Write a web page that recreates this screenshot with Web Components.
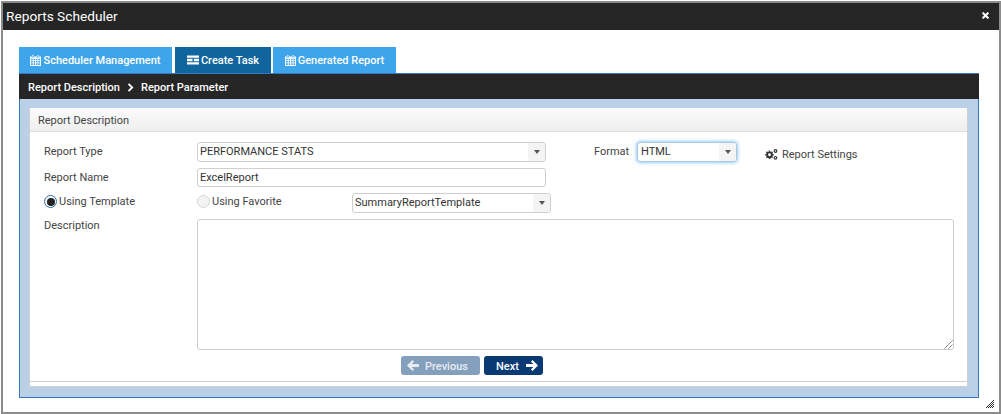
<!DOCTYPE html>
<html>
<head>
<meta charset="utf-8">
<title>Reports Scheduler</title>
<style>
html, body { margin: 0; padding: 0; background: #fff; }
body { font-family: Roboto, "Liberation Sans", sans-serif; width: 1001px; height: 414px; overflow: hidden; padding: 1px 0 0 1px; box-sizing: border-box; }
</style>
</head>
<body>
<report-window heading="Reports Scheduler">
  <tab-strip>
    <tab-button icon="calendar" width="153">Scheduler Management</tab-button>
    <tab-button icon="tasks" width="96" active>Create Task</tab-button>
    <tab-button icon="calendar" width="123">Generated Report</tab-button>
  </tab-strip>
  <step-bar></step-bar>
  <blue-panel>
    <form-card heading="Report Description">
      <form-row>
        <field-label width="153" nudge>Report Type</field-label>
        <combo-box width="349">PERFORMANCE STATS</combo-box>
        <field-label width="43" nudge style="margin-left:48px">Format</field-label>
        <combo-box width="100" focused>HTML</combo-box>
        <settings-link></settings-link>
      </form-row>
      <form-row style="margin-top:6px;height:19px">
        <field-label width="153">Report Name</field-label>
        <text-box width="349">ExcelReport</text-box>
      </form-row>
      <form-row style="margin-top:6px">
        <radio-option width="153" checked>Using Template</radio-option>
        <radio-option width="155" disabled>Using Favorite</radio-option>
        <combo-box width="199">SummaryReportTemplate</combo-box>
      </form-row>
      <form-row style="margin-top:6px;height:131px;align-items:flex-start">
        <field-label width="153">Description</field-label>
        <text-area width="757" height="131"></text-area>
      </form-row>
      <button-row>
        <nav-button dir="prev">Previous</nav-button>
        <nav-button dir="next">Next</nav-button>
      </button-row>
    </form-card>
  </blue-panel>
</report-window>
<script>
const ICONS = {
  calendar: '<svg width="11" height="11" viewBox="0 0 12 12"><path fill="currentColor" fill-rule="evenodd" d="M2.500 0h1.200v2h-1.200zM8.300 0h1.200v2h-1.200zM0 1.500h2v1.200h2.200V1.500h3.600v1.200H10V1.500h2V12H0zM1 4v1.600h2V4zm3 0v1.600h1.600V4zm2.600 0v1.600h1.600V4zM9.200 4v1.600H11V4zM1 6.500v1.700h2V6.500zm3 0v1.700h1.600V6.500zm2.600 0v1.700h1.600V6.500zm2.600 0v1.700H11V6.500zM1 9.100V11h2V9.100zm3 0V11h1.600V9.100zm2.600 0V11h1.600V9.100zm2.600 0V11H11V9.100z"/></svg>',
  tasks: '<svg width="12" height="10" viewBox="0 0 13 10"><path fill="currentColor" d="M0 0h13v2.600H0zM0 3.700h6v2.600H0zM7.500 3.700H13v2.600H7.500zM0 7.400h13V10H0z"/></svg>',
  left: '<svg width="12" height="11" viewBox="0 0 11 10"><path fill="currentColor" d="M5 0l1.500 1.500L4.200 3.700H11v2.600H4.200l2.300 2.200L5 10 0 5z"/></svg>',
  right: '<svg width="12" height="11" viewBox="0 0 11 10"><path fill="currentColor" d="M6 0L4.500 1.500l2.300 2.200H0v2.600h6.800L4.500 8.500 6 10l5-5z"/></svg>',
  gears: '<svg width="13" height="11" viewBox="0 0 13 11"><g stroke="#333" fill="none"><circle cx="4.500" cy="5.800" r="2.400" stroke-width="1.900"/><path stroke-width="1.400" d="M4.500 1.500v1.300M4.500 8.800v1.300M0.200 5.800h1.300M7.500 5.800h1.300M1.500 2.800l.9.9M6.600 7.900l.9.9M7.500 2.800l-.9.9M2.400 7.900l-.9.9"/><circle cx="10.500" cy="2" r="1.300" stroke-width="1.200"/><circle cx="10.500" cy="8.800" r="1.300" stroke-width="1.200"/></g></svg>'
}

class ReportWindow extends HTMLElement {
  constructor () {
    super()
    this.attachShadow({ mode: 'open' }).innerHTML = `
      <style>
      :host { display: block; box-sizing: border-box; width: 1000px; height: 413px; position: relative; border: 2px solid #8c8c8c; }
      .title { height: 27px; box-sizing: border-box; padding: 0 10px 2px 3px; background: #262626; color: #fff; font-size: 13.700px; display: flex; align-items: center;
        justify-content: space-between; }
      .close { width: 7px; height: 7px; }
      .body { padding: 17px 20px 0 16px; }
      .grip { position: absolute; right: 5px; bottom: 4px; }
      </style>
      <div class="title"><span id="t"></span>
        <svg class="close" viewBox="0 0 7 7"><path stroke="#fff" stroke-width="2" d="M0.600 0.600l5.800 5.800M6.400 0.600l-5.800 5.800"/></svg></div>
      <div class="body"><slot></slot></div>
      <svg class="grip" width="8" height="8" viewBox="0 0 8 8"><path stroke="#333" stroke-width="1" fill="none" d="M0 8L8 0M2 8L8 2M4 8L8 4M6 8L8 6"/></svg>`
    this.shadowRoot.getElementById('t').textContent = this.getAttribute('heading')
  }
}

class TabStrip extends HTMLElement {
  constructor () {
    super()
    this.attachShadow({ mode: 'open' }).innerHTML = `
      <style>:host { display: flex; gap: 2px; height: 26px; }
      ::slotted(:nth-child(2)) { margin-left: 1px; }</style><slot></slot>`
  }
}

class TabButton extends HTMLElement {
  constructor () {
    super()
    const icon = ICONS[this.getAttribute('icon')]
    this.attachShadow({ mode: 'open' }).innerHTML = `
      <style>
      :host { display: flex; box-sizing: border-box; width: ${this.getAttribute('width')}px; background: #3fa5eb; color: #fff;
        font-size: 11px; font-weight: 500; align-items: center; justify-content: center; gap: 2px; white-space: nowrap; }
      :host([active]) { background: #11659f; }
      svg { display: block; }
      </style>${icon}<slot></slot>`
  }
}

class StepBar extends HTMLElement {
  constructor () {
    super()
    this.attachShadow({ mode: 'open' }).innerHTML = `
      <style>
      :host { display: flex; height: 26px; background: #262626; color: #fff; font-size: 11px; font-weight: 500;
        align-items: center; padding: 2px 0 0 9px; gap: 7px; border-top: 1px solid #3579c0; box-sizing: border-box; }
      svg { display: block; }
      </style>
      <span>Report Description</span>
      <svg width="7" height="9" viewBox="0 0 7 9"><path fill="none" stroke="#fff" stroke-width="1.800" d="M1.500 0.800l3.700 3.700-3.700 3.700"/></svg>
      <span>Report Parameter</span>`
  }
}

class BluePanel extends HTMLElement {
  constructor () {
    super()
    this.attachShadow({ mode: 'open' }).innerHTML = `
      <style>
      :host { display: block; box-sizing: border-box; height: 299px; background: #b9d0e6; padding: 9px 10px 10px 9px;
        border: solid #3579c0; border-width: 0 1px 1px 1px; }
      </style><slot></slot>`
  }
}

class FormCard extends HTMLElement {
  constructor () {
    super()
    this.attachShadow({ mode: 'open' }).innerHTML = `
      <style>
      :host { display: block; box-sizing: border-box; height: 279px; background: #fff; border: solid #d0d0d0; border-width: 0 1px 1px 1px; color: #333; }
      .head { height: 24px; box-sizing: border-box; padding: 1px 0 0 8px; display: flex; align-items: center; font-size: 11px;
        background: linear-gradient(#fbfbfb, #eeeeee); border-bottom: 1px solid #dcdce2; color: #444; }
      .main { padding: 10px 0 0 14px; }
      </style>
      <div class="head" id="h"></div>
      <div class="main"><slot></slot></div>`
    this.shadowRoot.getElementById('h').textContent = this.getAttribute('heading')
  }
}

class FormRow extends HTMLElement {
  constructor () {
    super()
    this.attachShadow({ mode: 'open' }).innerHTML = `
      <style>:host { display: flex; height: 20px; align-items: center; }</style><slot></slot>`
  }
}

class FieldLabel extends HTMLElement {
  constructor () {
    super()
    this.attachShadow({ mode: 'open' }).innerHTML = `
      <style>:host { display: block; width: ${this.getAttribute('width')}px; font-size: 11px; color: #444; white-space: nowrap; line-height: 13px; }
      :host([nudge]) { margin-top: -2px; }</style><slot></slot>`
  }
}

class ComboBox extends HTMLElement {
  constructor () {
    super()
    this.attachShadow({ mode: 'open' }).innerHTML = `
      <style>
      :host { display: flex; box-sizing: border-box; width: ${this.getAttribute('width')}px; height: 20px; border: 1px solid #cfcfcf;
        border-radius: 3px; font-size: 11px; color: #333; align-items: center; padding-left: 2px; background: #fff; overflow: hidden; }
      :host([focused]) { border-color: #a6c8e6; box-shadow: 0 0 4px #6db3ee; padding-left: 3px; }
      .txt { flex: 1; white-space: nowrap; margin-top: -2px; }
      .arr { width: 17px; height: 100%; background: #f4f4f4; display: flex; align-items: center; justify-content: center; }
      .arr i { width: 0; height: 0; border: solid transparent; border-width: 4px 3.500px 0 3.500px; border-top-color: #555; margin-top: -1px; }
      </style>
      <span class="txt"><slot></slot></span><span class="arr"><i></i></span>`
  }
}

class TextBox extends HTMLElement {
  constructor () {
    super()
    this.attachShadow({ mode: 'open' }).innerHTML = `
      <style>
      :host { display: flex; box-sizing: border-box; width: ${this.getAttribute('width')}px; height: 19px; border: 1px solid #cfcfcf;
        border-radius: 3px; font-size: 11px; color: #333; align-items: center; padding-left: 2px; background: #fff; }
      </style><slot></slot>`
  }
}

class TextArea extends HTMLElement {
  constructor () {
    super()
    this.attachShadow({ mode: 'open' }).innerHTML = `
      <style>
      :host { display: block; position: relative; box-sizing: border-box; width: ${this.getAttribute('width')}px; height: ${this.getAttribute('height')}px;
        border: 1px solid #cfcfcf; border-radius: 3px; background: #fff; }
      svg { position: absolute; right: 0; bottom: 0; }
      </style>
      <svg width="9" height="9" viewBox="0 0 9 9"><path stroke="#555" stroke-width="1" fill="none" stroke-dasharray="1.400 .6" d="M0.500 8.500l8-8M4.500 8.500l4-4"/></svg>`
  }
}

class RadioOption extends HTMLElement {
  constructor () {
    super()
    const dot = this.hasAttribute('checked') ? '<span class="dot"></span>' : ''
    this.attachShadow({ mode: 'open' }).innerHTML = `
      <style>
      :host { display: flex; width: ${this.getAttribute('width')}px; align-items: center; gap: 2px; font-size: 11px; color: #444; margin-top: -3px; white-space: nowrap; }
      .ring { box-sizing: border-box; width: 13px; height: 13px; border-radius: 50%; border: 1px solid #2e6da4; display: flex;
        align-items: center; justify-content: center; background: #fff; }
      :host([disabled]) .ring { border: 1px solid #d5d5d5; background: #f3f3f3; }
      .dot { width: 8px; height: 8px; border-radius: 50%; background: #222; }
      </style>
      <span class="ring">${dot}</span><slot></slot>`
  }
}

class SettingsLink extends HTMLElement {
  constructor () {
    super()
    this.attachShadow({ mode: 'open' }).innerHTML = `
      <style>
      :host { display: flex; align-items: center; gap: 4px; margin-left: 28px; margin-top: 4px; font-size: 11px; color: #444; white-space: nowrap; }
      svg { display: block; }
      </style>${ICONS.gears}<span>Report Settings</span>`
  }
}

class ButtonRow extends HTMLElement {
  constructor () {
    super()
    this.attachShadow({ mode: 'open' }).innerHTML = `
      <style>
      :host { display: flex; gap: 4px; padding: 6px 0 6px 371px; margin-left: -14px; border-bottom: 1px solid #d0d0d0; }
      </style><slot></slot>`
  }
}

class NavButton extends HTMLElement {
  constructor () {
    super()
    const prev = this.getAttribute('dir') === 'prev'
    this.attachShadow({ mode: 'open' }).innerHTML = `
      <style>
      :host { display: flex; box-sizing: border-box; height: 19px; border-radius: 3px; color: #fff; font-size: 11px; font-weight: 500;
        align-items: center; background: #0a3a74; width: 59px; padding-left: 12px; gap: 7px; }
      :host([dir=prev]) { background: #84a0bd; width: 79px; color: #e6ecf2; padding-left: 6px; gap: 6px; }
      svg { display: block; }
      .t { padding-top: 1px; }
      </style>${prev ? ICONS.left + '<span class="t"><slot></slot></span>' : '<span class="t"><slot></slot></span>' + ICONS.right}`
  }
}

customElements.define('report-window', ReportWindow)
customElements.define('tab-strip', TabStrip)
customElements.define('tab-button', TabButton)
customElements.define('step-bar', StepBar)
customElements.define('blue-panel', BluePanel)
customElements.define('form-card', FormCard)
customElements.define('form-row', FormRow)
customElements.define('field-label', FieldLabel)
customElements.define('combo-box', ComboBox)
customElements.define('text-box', TextBox)
customElements.define('text-area', TextArea)
customElements.define('radio-option', RadioOption)
customElements.define('settings-link', SettingsLink)
customElements.define('button-row', ButtonRow)
customElements.define('nav-button', NavButton)
</script>
</body>
</html>
